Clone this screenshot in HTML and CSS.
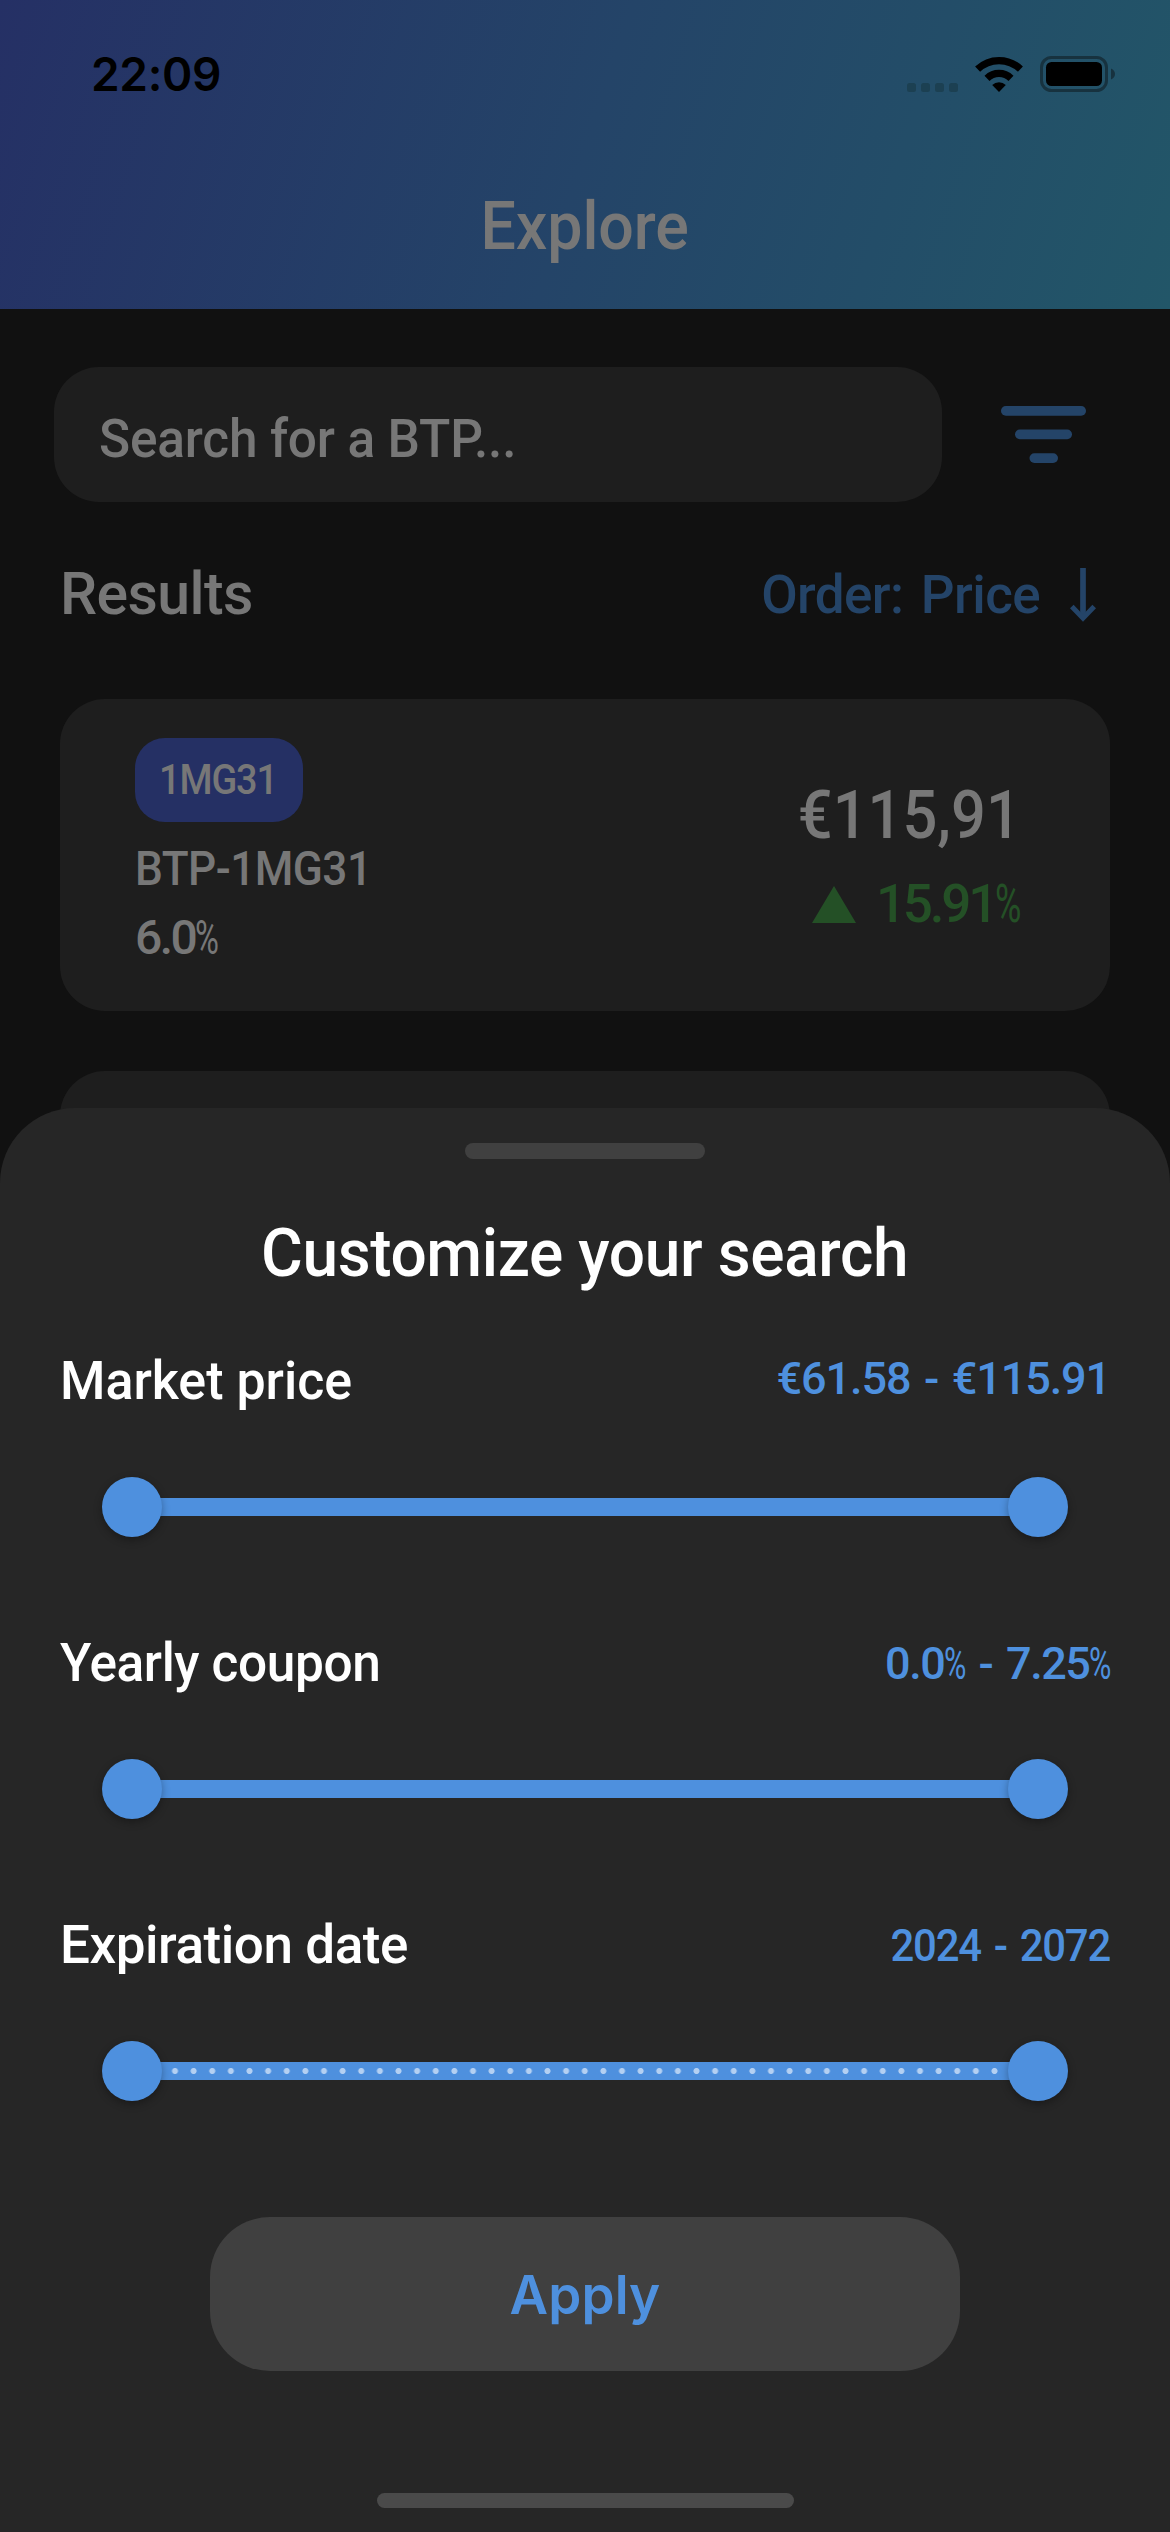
FILE: index.html
```html
<!DOCTYPE html>
<html lang="en">
<head>
<meta charset="utf-8">
<title>Explore</title>
<link rel="stylesheet" href="styles.css">
</head>
<body>
<div class="screen">
  <header class="header">
    <div class="status">
      <span class="time">22:09</span>
      <div class="status-icons">
        <svg class="signal" width="51" height="9" viewBox="0 0 51 9"><g fill="#1c4052"><rect width="9" height="9" rx="2.5"/><rect x="14" width="9" height="9" rx="2.5"/><rect x="28" width="9" height="9" rx="2.5"/><rect x="42" width="9" height="9" rx="2.5"/></g></svg>
        <svg class="wifi" width="48" height="36" viewBox="0 0 48 36"><path d="M24 36 17.2 28.9a9.8 9.8 0 0 1 13.6 0Z"/><path d="M12 22.3a17.3 17.3 0 0 1 24 0" fill="none" stroke="#000" stroke-width="7.2"/><path d="M2.6 13.2a30.8 30.8 0 0 1 42.8 0" fill="none" stroke="#000" stroke-width="7.2"/></svg>
        <svg class="battery" width="75" height="36" viewBox="0 0 75 36"><rect x="1.5" y="1.5" width="65" height="33" rx="10" fill="none" stroke="#17323f" stroke-width="3"/><rect x="6" y="6" width="56" height="24" rx="5.5"/><path d="M71 12.5c2.5 1 4 3 4 5.5s-1.5 4.5-4 5.5Z" fill="#17323f"/></svg>
      </div>
    </div>
    <h1 class="page-title"><span class="fit">Explore</span></h1>
  </header>
  <main class="content">
    <div class="search-row">
      <div class="search-field"><span class="fit">Search for a BTP...</span></div>
      <svg class="filter" width="85" height="57" viewBox="0 0 85 57" fill="#244468"><rect width="85" height="9.7" rx="4.8"/><rect x="14" y="23.5" width="57" height="9.7" rx="4.8"/><rect x="28.5" y="47.2" width="28.5" height="9.8" rx="4.9"/></svg>
    </div>
    <div class="results-row">
      <h2 class="results">Results</h2>
      <div class="order"><span>Order: Price</span>
        <svg width="26" height="54" viewBox="0 0 26 54" fill="none" stroke="#244468"><path d="M13 0v48" stroke-width="5.7"/><path d="M1.8 38.5 13 50.2 24.2 38.5" stroke-width="5"/></svg>
      </div>
    </div>
    <article class="card">
      <div class="bond">
        <span class="badge"><span class="fit">1MG31</span></span>
        <span class="bond-line name"><span class="fit">BTP-1MG31</span></span>
        <span class="bond-line coupon">6.0<span class="pct">%</span></span>
      </div>
      <div class="quote">
        <span class="price fit">€115,91</span>
        <span class="change"><svg width="44" height="37" viewBox="0 0 44 37"><path d="M22 0 44 37H0Z" fill="#245026"/></svg><span class="delta">15.91<span class="pct">%</span></span></span>
      </div>
    </article>
    <article class="card next"></article>
  </main>
  <section class="sheet">
    <div class="handle"></div>
    <h2 class="sheet-title"><span class="fit">Customize your search</span></h2>
    <div class="group">
      <div class="label-row"><span class="label fit market">Market price</span><span class="value prices">€61.58 - €115.91</span></div>
      <div class="slider"><i class="knob"></i><i class="track"></i><i class="knob"></i></div>
    </div>
    <div class="group">
      <div class="label-row"><span class="label fit yearly">Yearly coupon</span><span class="value coupons">0.0<span class="pct">%</span> - 7.25<span class="pct">%</span></span></div>
      <div class="slider"><i class="knob"></i><i class="track"></i><i class="knob"></i></div>
    </div>
    <div class="group">
      <div class="label-row"><span class="label expiry">Expiration date</span><span class="value fit years">2024 - 2072</span></div>
      <div class="slider"><i class="knob"></i><i class="track steps"></i><i class="knob"></i></div>
    </div>
    <button class="apply">Apply</button>
    <div class="home"></div>
  </section>
</div>
</body>
</html>
```
FILE: styles.css
```css
* { box-sizing: border-box; margin: 0; padding: 0; }
body { background: #111; font-family: Roboto, "Liberation Sans", sans-serif; font-weight: 500; }
.screen { position: relative; width: 1170px; height: 2532px; overflow: hidden; background: #111; color: #777; white-space: nowrap; }

/* Narrows a run of text around its own anchor edge */
.fit { display: inline-block; transform: scaleX(var(--sx, 1)); transform-origin: left center; }
.pct { display: inline-block; transform: scaleX(.68); transform-origin: left center; margin-right: -.24em; font-weight: 400; }

.header { height: 309px; background: linear-gradient(108deg, #253065 0%, #244468 50%, #225668 100%); }
.status { height: 149px; padding: 0 55px 0 91px; display: flex; align-items: center; justify-content: space-between; }
.time { font: 600 46px/149px Inter, sans-serif; letter-spacing: -.33px; color: #000; }
.status-icons { display: flex; align-items: flex-end; height: 37px; padding-bottom: 1px; }
.wifi { margin: 0 17px; }
.page-title { font-size: 66px; font-weight: 500; line-height: 155px; text-align: center; }
.page-title .fit { --sx: .95; transform-origin: center; letter-spacing: -.1px; }

.content { padding: 58px 60px 0; }
.search-row { display: flex; align-items: center; margin: 0 24px 0 -6px; }
.search-field { width: 888px; height: 135px; border-radius: 45px; background: #1e1e1e; padding: 9px 45px 0; font-size: 53px; line-height: 127px; }
.search-field .fit { --sx: .97; letter-spacing: -.2px; }
.filter { margin-left: 59px; }
.results-row { display: flex; justify-content: space-between; align-items: center; height: 80px; margin: 53px 14px 64px 0; }
.results { font-size: 59px; font-weight: 500; line-height: 78px; padding-bottom: 2px; letter-spacing: -.6px; }
.order { display: flex; align-items: center; gap: 30px; font-size: 53px; line-height: 80px; letter-spacing: -.6px; word-spacing: 5px; color: #244468; }

.card { display: flex; justify-content: space-between; width: 1050px; height: 312px; border-radius: 45px; background: #1e1e1e; padding: 39px 89px 0 75px; }
.card.next { margin-top: 60px; }
.bond { display: flex; flex-direction: column; align-items: flex-start; font-size: 48px; line-height: 69px; }
.badge { width: 168px; height: 84px; margin-bottom: 12px; padding-left: 24px; border-radius: 30px; background: #253064; font-size: 42px; line-height: 84px; }
.badge .fit { --sx: .9; letter-spacing: -1.2px; }
.name .fit { --sx: .92; letter-spacing: -.6px; }
.coupon { letter-spacing: -2.5px; }
.quote { display: flex; flex-direction: column; align-items: flex-end; padding-top: 34px; line-height: 88px; }
.price { font-size: 66px; --sx: .93; transform-origin: right center; }
.change { display: flex; align-items: center; gap: 20px; margin-right: 3px; font-size: 53px; letter-spacing: -3.2px; color: #245026; }

.sheet { position: absolute; left: 0; top: 1108px; width: 1170px; height: 1424px; border-radius: 75px 75px 0 0; background: #262626; padding-top: 35px; }
.handle { width: 240px; height: 15.5px; margin: 0 auto 45px; border-radius: 8px; background: #404040; }
.sheet-title { height: 100px; margin-bottom: 36.5px; color: #fff; font-size: 66px; font-weight: 500; line-height: 100px; text-align: center; }
.sheet-title .fit { --sx: .97; transform-origin: center; letter-spacing: -.4px; }
.group { height: 282px; }
.label-row { display: flex; justify-content: space-between; align-items: center; height: 81px; margin-bottom: 55.5px; padding: 0 60px; }
.label { color: #fff; font-size: 53px; }
.market { --sx: .98; letter-spacing: 0; }
.yearly { --sx: .97; letter-spacing: -.4px; }
.expiry { letter-spacing: -.45px; }
.value { color: #4e90de; font-size: 45px; }
.prices { letter-spacing: -1.1px; word-spacing: 3.5px; padding-bottom: 4px; }
.coupons { letter-spacing: -1.5px; word-spacing: 4px; padding-top: 1px; }
.years { --sx: .93; transform-origin: right center; letter-spacing: -1.3px; word-spacing: 4px; padding-top: 1px; }
.slider { display: flex; align-items: center; height: 60px; padding: 0 102px; }
.knob { position: relative; flex: none; width: 60px; height: 60px; border-radius: 50%; background: #4e90de; box-shadow: 0 3px 9px rgba(0, 0, 0, .32); }
.track { flex: 1; height: 18px; margin: 0 -6px; background-color: #4e90de; }
.steps { background-image: radial-gradient(circle, #b4d0f2 0, #b4d0f2 2.6px, transparent 3.4px); background-size: 18.64px 18px; background-repeat: repeat-x; background-position: 9.7px 0; }
.apply { display: block; width: 750px; height: 153.5px; margin: 31px auto 122.5px; padding-top: 2px; border: 0; border-radius: 60px; background: #404040; color: #4e90de; font: 600 53px Inter, sans-serif; letter-spacing: .12px; }
.home { width: 417px; height: 15px; margin: 0 auto; border-radius: 8px; background: #4a4a4a; }
```
